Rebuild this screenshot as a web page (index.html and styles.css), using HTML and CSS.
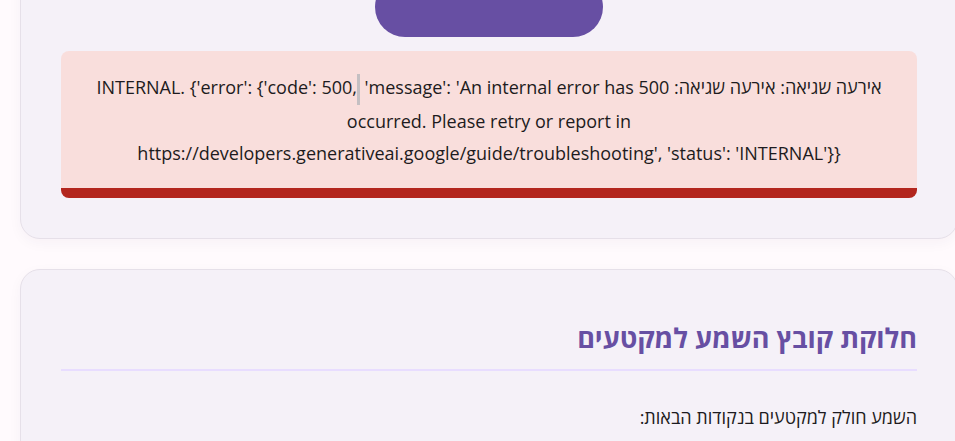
FILE: index.html
```html
<!DOCTYPE html>
<html lang="he" dir="rtl">
<head>
    <meta charset="utf-8">
    <title>תמלול קובץ שמע</title>
    <link rel="stylesheet" href="styles.css">
</head>
<body>
    <div class="page">
        <div class="card">
            <div class="actions">
                <button class="btn-primary" aria-label="תמלל"></button>
            </div>
            <div class="error-box">
                אירעה שגיאה: אירעה שגיאה: 500 INTERNAL. {'error': {'code': 500,<span class="caret"></span> 'message': 'An internal error has occurred. Please retry or report in https://developers.generativeai.google/guide/troubleshooting', 'status': 'INTERNAL'}}
            </div>
        </div>

        <div class="card">
            <h2 class="section-title">חלוקת קובץ השמע למקטעים</h2>
            <p class="section-text">השמע חולק למקטעים בנקודות הבאות:</p>
        </div>
    </div>
</body>
</html>
```

FILE: styles.css
```css
body {
    margin: 0;
    background-color: #fffafd;
    font-family: "Open Sans", "Noto Sans", sans-serif;
    color: #1d1b20;
    overflow: hidden;
}
.page {
    width: 938px;
    margin-top: -64px;
    margin-right: -3px;
    margin-left: 20px;
}
.card {
    background-color: #f5f1f8;
    border: 1px solid #e6e0e9;
    border-radius: 20px;
    padding: 40px;
    margin-bottom: 30px;
    box-shadow: 0 4px 14px rgba(60, 30, 80, 0.04);
}
.actions {
    text-align: center;
    margin-bottom: 14px;
}
.btn-primary {
    display: inline-block;
    vertical-align: top;
    background-color: #674fa3;
    border: none;
    width: 228px;
    height: 60px;
    border-radius: 30px;
}
.error-box {
    background-color: #f9dedc;
    border-bottom: 10px solid #b3261e;
    border-radius: 8px;
    padding: 20px 24px 19px;
    text-align: center;
    font-size: 18px;
    line-height: 32px;
}
.caret {
    display: inline-block;
    width: 3px;
    height: 31px;
    background-color: #c4bfc2;
    vertical-align: middle;
}
.section-title {
    margin: 10px 0 0;
    padding-bottom: 13px;
    border-bottom: 2px solid #e8ddff;
    color: #674fa3;
    font-size: 27px;
    line-height: 36px;
    font-weight: 700;
}
.section-text {
    margin: 33px 0 0;
    font-size: 18px;
    line-height: 27px;
}
```
